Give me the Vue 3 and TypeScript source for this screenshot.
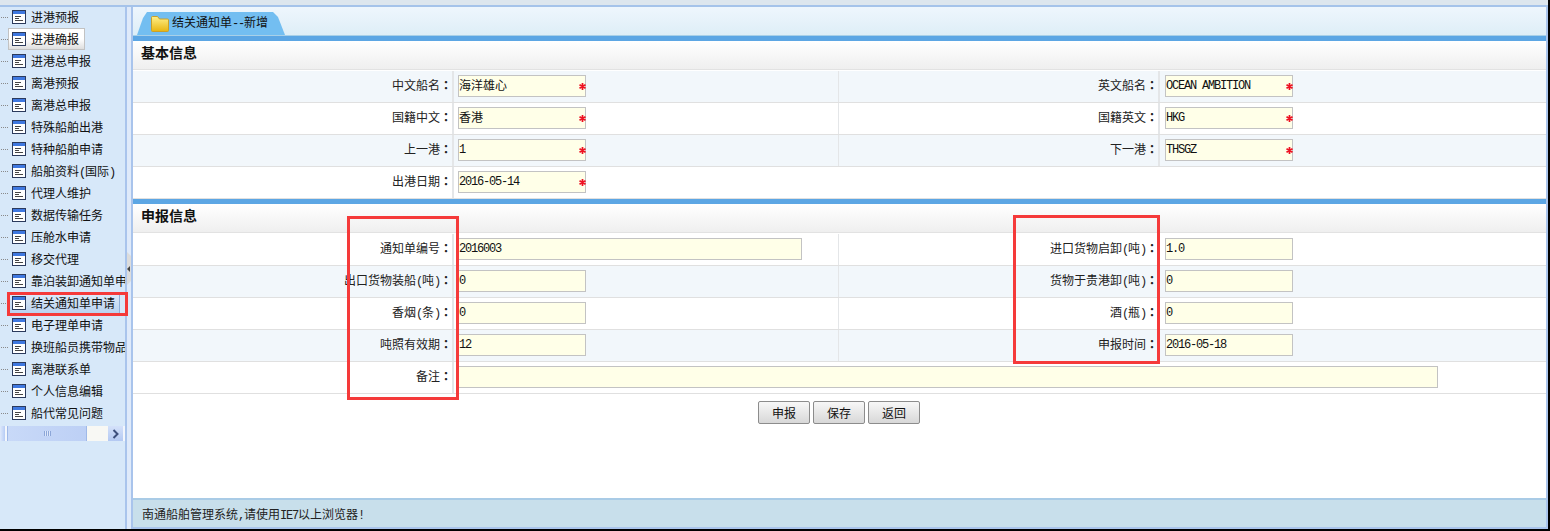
<script setup lang="ts">
interface Field { label: string; value: string; star?: boolean; cjk?: boolean; wide?: boolean }
const menu: string[] = ['进港预报','进港确报','进港总申报','离港预报','离港总申报','特殊船舶出港','特种船舶申请','船舶资料(国际)','代理人维护','数据传输任务','压舱水申请','移交代理','靠泊装卸通知单申请','结关通知单申请','电子理单申请','换班船员携带物品','离港联系单','个人信息编辑','船代常见问题']
const basic: Field[][] = [
  [{ label: '中文船名', value: '海洋雄心', star: true, cjk: true }, { label: '英文船名', value: 'OCEAN AMBITION', star: true }],
  [{ label: '国籍中文', value: '香港', star: true, cjk: true }, { label: '国籍英文', value: 'HKG', star: true }],
  [{ label: '上一港', value: '1', star: true }, { label: '下一港', value: 'THSGZ', star: true }],
  [{ label: '出港日期', value: '2016-05-14', star: true }],
]
const report: Field[][] = [
  [{ label: '通知单编号', value: '2016003', wide: true }, { label: '进口货物启卸(吨)', value: '1.0' }],
  [{ label: '出口货物装船(吨)', value: '0' }, { label: '货物于贵港卸(吨)', value: '0' }],
  [{ label: '香烟(条)', value: '0' }, { label: '酒(瓶)', value: '0' }],
  [{ label: '吨照有效期', value: '12' }, { label: '申报时间', value: '2016-05-18' }],
]
const latin = /^([()!,]|--|IE7)$/
function parts(text: string): { t: string; m: boolean }[] {
  return text.split(/([()!,]|--|IE7)/).filter(Boolean).map((t) => ({ t, m: latin.test(t) }))
}
</script>

<template>
  <div class="page">
    <div class="topbar"></div>
    <div class="body">
      <aside class="side">
        <ul class="tree">
          <li v-for="(m, i) in menu" :key="m" class="node">
            <span class="dots"></span>
            <span class="item" :class="{ hover: i === 1, active: i === 13 }">
              <svg class="ico" width="14" height="14" viewBox="0 0 14 14">
                <rect x="0.5" y="0.5" width="13" height="13" fill="#fff" stroke="#2b3a5c" />
                <rect x="1" y="1" width="12" height="3" fill="#3f78e0" />
                <path d="M3 6.5h6M3 8.5h4M3 10.5h8" stroke="#444" stroke-width="1" />
              </svg>
              <span class="label"><span v-for="(p, k) in parts(m)" :key="k" :class="{ mono: p.m }">{{ p.t }}</span></span>
            </span>
          </li>
        </ul>
        <div class="hscroll">
          <span class="sb-left"></span>
          <span class="sb-thumb"><i></i></span>
          <span class="sb-track"></span>
          <span class="sb-btn">
            <svg width="8" height="10" viewBox="0 0 8 10"><path d="M1.5 1l4 4-4 4" fill="none" stroke="#3d4f7c" stroke-width="2" /></svg>
          </span>
        </div>
      </aside>
      <div class="gutter"><span class="handle"><i></i></span></div>
      <main class="main">
        <div class="tabbar">
          <div class="tab">
            <svg class="folder" width="18" height="16" viewBox="0 0 18 16">
              <defs>
                <linearGradient id="fold" x1="0" y1="0" x2="0" y2="1">
                  <stop offset="0" stop-color="#fff08a" />
                  <stop offset="1" stop-color="#e8b510" />
                </linearGradient>
              </defs>
              <path d="M0.5 3V1.5q0-1 1-1h5l2 2.5h8q1 0 1 1v10.5q0 1-1 1h-15q-1 0-1-1z" fill="url(#fold)" stroke="#c9a02a" />
            </svg>
            <span><span v-for="(p, k) in parts('结关通知单--新增')" :key="k" :class="{ mono: p.m }">{{ p.t }}</span></span>
          </div>
        </div>

        <section class="sec">
          <h2 class="sec-title">基本信息</h2>
          <div v-for="(row, r) in basic" :key="r" class="row" :class="{ odd: r % 2 === 0 }">
            <template v-for="f in row" :key="f.label">
              <div class="lbl">{{ f.label }}<span class="colon">：</span></div>
              <div class="val">
                <span class="inp-wrap">
                  <input class="inp" :class="{ cjk: f.cjk }" :value="f.value" readonly />
                  <svg v-if="f.star" class="star" width="7" height="7" viewBox="0 0 7 7">
                    <path d="M3.5 0v7M0.5 1.7l6 3.6M6.5 1.7l-6 3.6" stroke="#ee1122" stroke-width="1.7" />
                  </svg>
                </span>
              </div>
            </template>
          </div>
        </section>

        <section class="sec sec2">
          <h2 class="sec-title">申报信息</h2>
          <div v-for="(row, r) in report" :key="r" class="row" :class="{ odd: r % 2 === 1 }">
            <template v-for="f in row" :key="f.label">
              <div class="lbl"><span v-for="(p, k) in parts(f.label)" :key="k" :class="{ mono: p.m }">{{ p.t }}</span><span class="colon">：</span></div>
              <div class="val">
                <input class="inp" :class="{ wide: f.wide }" :value="f.value" readonly />
              </div>
            </template>
          </div>
          <div class="row">
            <div class="lbl">备注<span class="colon">：</span></div>
            <div class="val span3"><input class="inp remark" readonly /></div>
          </div>
        </section>

        <div class="actions">
          <button class="btn">申报</button>
          <button class="btn">保存</button>
          <button class="btn">返回</button>
        </div>

        <footer class="foot"><span v-for="(p, k) in parts('南通船舶管理系统,请使用IE7以上浏览器!')" :key="k" :class="{ mono: p.m }">{{ p.t }}</span></footer>
      </main>
    </div>
    <div class="mark m1"></div>
    <div class="mark m2"></div>
    <div class="mark m3"></div>
  </div>
</template>

<style scoped>
.page {
  position: relative;
  width: 1550px;
  height: 531px;
  display: flex;
  flex-direction: column;
  overflow: hidden;
  background: #000;
  font: 12px "Noto Sans CJK SC", "Liberation Sans", sans-serif;
  color: #222;
}
.mono { font: 12px "Liberation Mono", monospace; letter-spacing: -1.2px; }
.colon { font-family: "Noto Sans CJK TC", sans-serif; font-weight: 700; }
.topbar {
  height: 5px;
  flex: none;
  margin-right: 2px;
  background: #dde6ee;
  border-bottom: 2px solid #a5c3ea;
  box-sizing: content-box;
}
.body {
  display: flex;
  height: 522px;
  margin-right: 2px;
  flex: none;
  background: #d7e8f9;
}
.side {
  width: 125px;
  flex: none;
  overflow: hidden;
  background: #d7e8f9;
}
.tree {
  list-style: none;
  margin: -1px 0 0;
  padding: 0;
  width: 125px;
}
.node {
  height: 22px;
  display: flex;
  align-items: center;
  white-space: nowrap;
  position: relative;
}
.dots {
  width: 7px;
  margin-left: 1px;
  border-top: 1px dotted #8a8a8a;
  flex: none;
}
.item {
  display: flex;
  align-items: center;
  height: 22px;
  box-sizing: border-box;
  padding-left: 3px;
  padding-right: 5px;
  flex: none;
  border: 1px solid transparent;
}
.item.hover {
  border: 1px solid #c2c2c2;
  background: linear-gradient(#fff 50%, #dedede);
}
.item.active {
  background: linear-gradient(#e0ecfa, #b9d2f0);
  border-right: 1px solid #8eaed8;
  padding-right: 4px;
}
.ico { flex: none; }
.label {
  margin-left: 5px;
  line-height: 20px;
  color: #111;
}
.hscroll {
  margin-top: 2px;
  height: 15px;
  display: flex;
  background: #f2f6fc;
}
.sb-left { width: 5px; background: linear-gradient(90deg, #dfe9fb, #b6ccf5); }
.sb-thumb {
  margin-left: 2px;
  width: 80px;
  display: flex;
  align-items: center;
  justify-content: center;
  background: linear-gradient(90deg, #c8d9f8, #bdd0f5);
  border-left: 1px solid #9fb9e8;
  border-right: 1px solid #9fb9e8;
  box-sizing: border-box;
}
.sb-thumb i {
  width: 7px;
  height: 5px;
  background: repeating-linear-gradient(90deg, #8ca6d8 0 1px, #dde7fa 1px 2px);
}
.sb-track { flex: 1; background: #f8f8f4; }
.sb-btn {
  width: 15px;
  margin-right: 2px;
  display: flex;
  align-items: center;
  justify-content: center;
  background: linear-gradient(#d4e1fa, #b4c9f2);
}
.gutter {
  width: 6px;
  flex: none;
  position: relative;
  background: #dfeafa;
  border-left: 2px solid #a9c4ec;
  box-sizing: border-box;
}
.handle {
  position: absolute;
  left: 0;
  top: 245px;
  width: 4px;
  height: 33px;
  background: #dcdcdc;
  clip-path: polygon(0 0, 100% 12%, 100% 88%, 0 100%);
  display: flex;
  align-items: center;
}
.handle i {
  border-style: solid;
  border-width: 3px 3px 3px 0;
  border-color: transparent #444 transparent transparent;
}
.main {
  flex: 1;
  min-width: 0;
  display: flex;
  flex-direction: column;
  background: #fff;
  border-left: 2px solid #a9c4ec;
  border-right: 2px solid #a9c4ec;
}
.tabbar {
  height: 29px;
  flex: none;
  padding: 5px 0 0 4px;
  box-sizing: border-box;
  background: linear-gradient(#eef6fd, #deeef7);
  border-bottom: 1px solid #a8d0e8;
}
.tab {
  width: 148px;
  height: 23px;
  box-sizing: border-box;
  padding: 0 0 3px 14px;
  display: flex;
  align-items: center;
  gap: 3px;
  background: #73bef1;
  color: #111;
  clip-path: polygon(0 100%, 6px 6px, 10px 0, 136px 0, 141px 5px, 148px 100%);
}
.folder { margin-top: 3px; flex: none; }
.sec-title {
  margin: 0 0 1px;
  height: 34px;
  box-sizing: border-box;
  padding: 0 0 0 8px;
  border-top: 5px solid #5ca6e4;
  border-bottom: 1px solid #e2e2e2;
  background: linear-gradient(#fff, #efefef);
  font-size: 14px;
  line-height: 22px;
  font-weight: 700;
  color: #111;
}
.sec { flex: none; }
.row {
  display: grid;
  grid-template-columns: 321px 385px 321px 1fr;
  height: 32px;
  box-sizing: border-box;
  border-bottom: 1px solid #e0e0e0;
}
.row.odd { background: #f2f7fb; }
.lbl {
  text-align: right;
  line-height: 28px;
  box-sizing: border-box;
  border-right: 2px solid #e4e6e8;
  white-space: nowrap;
  color: #222;
}
.val {
  padding: 4px 0 0 4px;
  min-width: 0;
  border-right: 1px solid #e4e6e8;
}
.val:last-child { border-right: 0; }
.row > .val:nth-child(4) { padding-left: 5px; }
.span3 { grid-column: span 3; }
.inp-wrap { position: relative; display: block; width: 128px; }
.inp {
  width: 128px;
  height: 22px;
  padding: 0 0 1px;
  box-sizing: border-box;
  border: 1px solid #c3c3c3;
  background: #ffffe8;
  outline: none;
  font: 12px "Liberation Mono", monospace;
  letter-spacing: -1.2px;
  color: #111;
  display: block;
}
.inp.cjk {
  padding-bottom: 3px;
  font: 12px "Noto Sans CJK SC", sans-serif;
  letter-spacing: 0;
}
.inp.wide { width: 344px; }
.inp.remark { width: 980px; }
.star {
  position: absolute;
  right: 0;
  top: 8px;
}
.actions {
  flex: none;
  display: flex;
  gap: 3px;
  padding: 7px 0 0 625px;
}
.btn {
  width: 52px;
  height: 23px;
  padding: 0;
  box-sizing: border-box;
  border: 1px solid #8c8c8c;
  border-radius: 2px;
  background: linear-gradient(#f7f7f7, #d8d8d8);
  font: 12px "Noto Sans CJK SC", sans-serif;
  color: #111;
}
.foot {
  margin-top: auto;
  flex: none;
  height: 31px;
  box-sizing: border-box;
  padding-left: 9px;
  line-height: 28px;
  background: #c8dfeb;
  border-top: 2px solid #a9cbe6;
  border-bottom: 2px solid #a9c4ec;
  color: #222;
}
.mark {
  position: absolute;
  box-sizing: border-box;
  border: 3px solid #f53a3a;
  pointer-events: none;
}
.m1 { left: 7px; top: 292px; width: 121px; height: 24px; }
.m2 { left: 347px; top: 216px; width: 112px; height: 184px; }
.m3 { left: 1013px; top: 215px; width: 147px; height: 149px; }
</style>
